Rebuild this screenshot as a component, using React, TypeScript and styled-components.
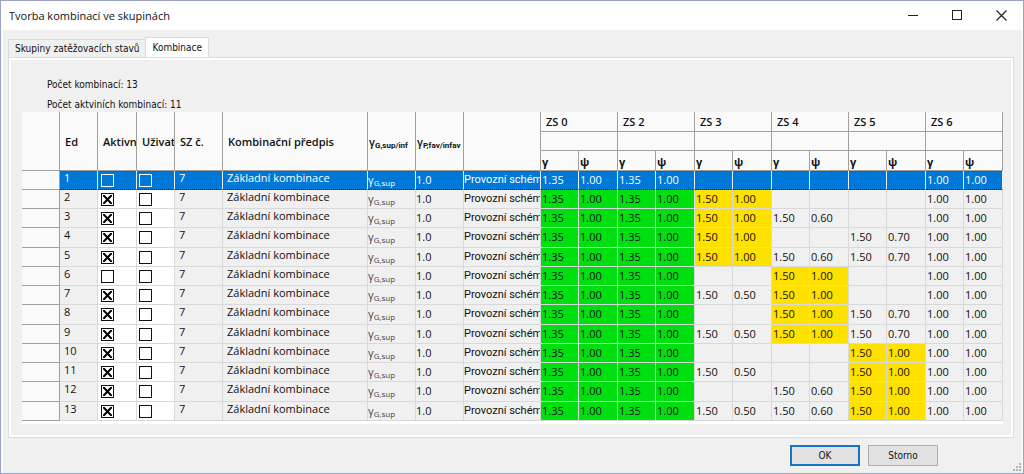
import React from "react";
import styled, { createGlobalStyle, css } from "styled-components";

const uiFont = `"Open Sans", "Noto Sans", sans-serif`;
const narrowFont = `Roboto, "Open Sans", sans-serif`;
const dialogFont = `"DejaVu Sans Condensed", "Noto Sans", sans-serif`;

const GlobalStyle = createGlobalStyle`
  * { box-sizing: border-box; }
  body { margin: 0; background: #f0f0f0; color: #111; }
`;

const Window = styled.div`
  display: flex;
  flex-direction: column;
  min-height: 100vh;
  border: 1px solid #9aa3c4;
  background: #f0f0f0;
  font: 10px/14px ${dialogFont};
`;

const TitleBar = styled.header`
  display: flex;
  align-items: center;
  justify-content: space-between;
  height: 29px;
  padding-left: 8px;
  background: #fff;
`;

const Title = styled.h1`
  margin: 0;
  font: 400 11px/16px ${uiFont};
`;

const WindowControls = styled.div`
  display: flex;
`;

const WindowButton = styled.button`
  display: flex;
  align-items: center;
  justify-content: center;
  width: 44px;
  height: 28px;
  padding: 0;
  border: 0;
  background: transparent;
`;

const Body = styled.main`
  flex: 1;
  display: flex;
  flex-direction: column;
  padding: 7px 8px 7px 5px;
  border: solid #fafafa;
  border-width: 0 1px 0 2px;
`;

const Tabs = styled.div`
  display: flex;
  align-items: flex-end;
  height: 20px;
`;

const Tab = styled.button<{ $active?: boolean }>`
  height: ${(p) => (p.$active ? 20 : 18)}px;
  padding: 0 6px;
  border: 1px solid #dadada;
  border-bottom: 0;
  background: ${(p) => (p.$active ? "#fff" : "#f0f0f0")};
  color: #111;
  font: 10px/16px ${dialogFont};
  white-space: nowrap;
  & + & { margin-left: -1px; }
`;

const Panel = styled.section`
  flex: 1;
  padding: 17px 10px 10px 13px;
  border: 1px solid #dcdcdc;
  outline: 2px solid #fff;
  outline-offset: -3px;
`;

const Summary = styled.p`
  margin: 0 0 0 25px;
  height: 20px;
  line-height: 20px;
`;

const Sheet = styled.div`
  margin-top: -3px;
  padding-bottom: 3px;
  background: #fff;
`;

const Grid = styled.table`
  width: 100%;
  table-layout: fixed;
  border-collapse: separate;
  border-spacing: 0;
  font: 11px/16px ${uiFont};
`;

const HeadRow = styled.tr<{ $tall?: boolean }>`
  height: ${(p) => (p.$tall ? 20 : 19)}px;
`;

const HeadCell = styled.th<{ $tight?: boolean }>`
  padding: 0 0 0 ${(p) => (p.$tight ? 1 : 5)}px;
  border-right: 1px solid #a0a0a0;
  border-bottom: 1px solid #a0a0a0;
  background: #fafafa;
  overflow: hidden;
  white-space: nowrap;
  text-align: left;
  font-weight: 600;
  &[rowspan] { padding-top: 2px; }
`;

const FactorHead = styled(HeadCell)`
  padding: 2px 0 0 1px;
  font-weight: 700;
`;

const Sub = styled.sub`
  font-size: 8px;
  line-height: 8px;
  vertical-align: -2px;
`;

const HeadSub = styled(Sub)`
  font-family: ${narrowFont};
  font-weight: 700;
`;

const RowHead = styled.th`
  padding: 0;
  border-right: 1px solid #a0a0a0;
  border-bottom: 1px solid #a0a0a0;
  background: #fafafa;
`;

type Tone = "plain" | "white" | "green" | "yellow";
const tones: Record<Tone, string> = {
  plain: "#f0f0f0",
  white: "#ffffff",
  green: "#00e010",
  yellow: "#ffe100",
};

const Cell = styled.td<{ $tone?: Tone; $low?: boolean; $indent?: number }>`
  padding: 0 0 0 ${(p) => p.$indent ?? 0}px;
  border-right: 1px solid #d9d9d9;
  border-bottom: 1px solid #d9d9d9;
  background: ${(p) => tones[p.$tone ?? "plain"]};
  vertical-align: top;
  line-height: ${(p) => (p.$low ? 18 : 14)}px;
  overflow: hidden;
  white-space: nowrap;
`;

const SchemeCell = styled(Cell)`
  font-family: ${narrowFont};
`;

const Row = styled.tr<{ $selected?: boolean }>`
  height: 19px;
  &:nth-child(4n) { height: 20px; }
  ${(p) =>
    p.$selected &&
    css`
      ${Cell} {
        background: #0078d7;
        border-right-color: #e6f1fb;
        border-bottom: 1px dotted #1c2b3a;
        box-shadow: inset 0 1px 0 #2a5f92;
        color: #fff;
      }
    `}
`;

const Check = styled.input<{ $inverse?: boolean }>`
  appearance: none;
  display: block;
  width: 13px;
  height: 13px;
  margin: 3px 0 0;
  border: 1px solid ${(p) => (p.$inverse ? "#fff" : "#111")};
  &:checked::before {
    content: "";
    display: block;
    width: 9px;
    height: 9px;
    margin: 1px;
    background: #000;
    clip-path: polygon(0 0, 18% 0, 50% 34%, 82% 0, 100% 0, 100% 14%, 66% 50%, 100% 86%, 100% 100%, 82% 100%, 50% 66%, 18% 100%, 0 100%, 0 86%, 34% 50%, 0 14%);
  }
`;

const Gamma = styled.span<{ $inverse?: boolean }>`
  color: ${(p) => (p.$inverse ? "#fff" : "#444")};
`;

const Footer = styled.footer`
  display: flex;
  gap: 8px;
  justify-content: flex-end;
  margin-top: 7px;
  padding-right: 76px;
`;

const DialogButton = styled.button<{ $primary?: boolean }>`
  width: 70px;
  height: 21px;
  padding: 0;
  border: ${(p) => (p.$primary ? "2px solid #1874c4" : "1px solid #adadad")};
  background: #e1e1e1;
  color: #111;
  font: 10px/14px ${dialogFont};
`;

const Grip = styled.svg`
  position: absolute;
  right: 3px;
  bottom: 3px;
`;

const Frame = styled.div`
  position: relative;
`;

const columnWidths = [38, 38, 39, 38, 48, 145, 48, 48, 77];
const groups = ["ZS 0", "ZS 2", "ZS 3", "ZS 4", "ZS 5", "ZS 6"];

type Combo = { active: boolean; main?: number; psi: Record<number, string> };
const combos: Combo[] = [
  { active: false, psi: {} },
  { active: true, main: 2, psi: {} },
  { active: true, main: 2, psi: { 3: "0.60" } },
  { active: true, main: 2, psi: { 4: "0.70" } },
  { active: true, main: 2, psi: { 3: "0.60", 4: "0.70" } },
  { active: false, main: 3, psi: {} },
  { active: true, main: 3, psi: { 2: "0.50" } },
  { active: true, main: 3, psi: { 4: "0.70" } },
  { active: true, main: 3, psi: { 2: "0.50", 4: "0.70" } },
  { active: true, main: 4, psi: {} },
  { active: true, main: 4, psi: { 2: "0.50" } },
  { active: true, main: 4, psi: { 3: "0.60" } },
  { active: true, main: 4, psi: { 2: "0.50", 3: "0.60" } },
];

function factors(combo: Combo, group: number): [string, string, Tone] {
  if (group < 2) return ["1.35", "1.00", "green"];
  if (group === 5) return ["1.00", "1.00", "plain"];
  if (combo.main === group) return ["1.50", "1.00", "yellow"];
  if (combo.psi[group]) return ["1.50", combo.psi[group], "plain"];
  return ["", "", "plain"];
}

function ComboRow({ combo, index }: { combo: Combo; index: number }) {
  const selected = index === 0;
  const n = index + 1;
  return (
    <Row $selected={selected}>
      <RowHead scope="row" aria-label={`Řádek ${n}`} />
      <Cell $indent={4}>{n}</Cell>
      <Cell $indent={3} $tone="white">
        <Check type="checkbox" defaultChecked={combo.active} $inverse={selected} aria-label={`Aktivní ${n}`} />
      </Cell>
      <Cell $indent={2} $tone="white">
        <Check type="checkbox" $inverse={selected} aria-label={`Uživatelská ${n}`} />
      </Cell>
      <Cell $indent={4}>7</Cell>
      <Cell $indent={4}>Základní kombinace</Cell>
      <Cell $low>
        <Gamma $inverse={selected}>γ<Sub>G,sup</Sub></Gamma>
      </Cell>
      <Cell $low>1.0</Cell>
      <SchemeCell $low>Provozní schém</SchemeCell>
      {groups.map((g, i) => {
        const [gamma, psi, tone] = factors(combo, i);
        return (
          <React.Fragment key={g}>
            <Cell $low $indent={1} $tone={tone}>{gamma}</Cell>
            <Cell $low $indent={1} $tone={tone}>{psi}</Cell>
          </React.Fragment>
        );
      })}
    </Row>
  );
}

export default function App() {
  return (
    <Frame>
      <GlobalStyle />
      <Window>
        <TitleBar>
          <Title>Tvorba kombinací ve skupinách</Title>
          <WindowControls>
            <WindowButton aria-label="Minimalizovat">
              <svg width="11" height="11" shapeRendering="crispEdges"><path d="M0 5.5h10" stroke="#222" /></svg>
            </WindowButton>
            <WindowButton aria-label="Maximalizovat">
              <svg width="11" height="11" shapeRendering="crispEdges"><path d="M.5 .5h9v9h-9z" fill="none" stroke="#222" /></svg>
            </WindowButton>
            <WindowButton aria-label="Zavřít">
              <svg width="11" height="11"><path d="M.5 .5l10 10M10.500 .5l-10 10" stroke="#222" strokeWidth="1.2" /></svg>
            </WindowButton>
          </WindowControls>
        </TitleBar>
        <Body>
          <Tabs role="tablist">
            <Tab role="tab" aria-selected={false}>Skupiny zatěžovacích stavů</Tab>
            <Tab role="tab" aria-selected $active>Kombinace</Tab>
          </Tabs>
          <Panel>
            <Summary>Počet kombinací: 13</Summary>
            <Summary>Počet aktviních kombinací: 11</Summary>
            <Sheet>
              <Grid>
                <colgroup>
                  {columnWidths.map((w, i) => <col key={i} width={w} />)}
                  {groups.map((g) => (
                    <React.Fragment key={g}>
                      <col width={38} />
                      <col width={39} />
                    </React.Fragment>
                  ))}
                </colgroup>
                <thead>
                  <HeadRow $tall>
                    <HeadCell rowSpan={3} />
                    <HeadCell rowSpan={3}>Ed</HeadCell>
                    <HeadCell rowSpan={3}>Aktivn</HeadCell>
                    <HeadCell rowSpan={3}>Uživate</HeadCell>
                    <HeadCell rowSpan={3}>SZ č.</HeadCell>
                    <HeadCell rowSpan={3}>Kombinační předpis</HeadCell>
                    <HeadCell rowSpan={3} $tight>γ<HeadSub>G,sup/inf</HeadSub></HeadCell>
                    <HeadCell rowSpan={3} $tight>γ<HeadSub>P,fav/infav</HeadSub></HeadCell>
                    <HeadCell rowSpan={3} />
                    {groups.map((g) => <HeadCell key={g} colSpan={2}>{g}</HeadCell>)}
                  </HeadRow>
                  <HeadRow>
                    {groups.map((g) => <HeadCell key={g} colSpan={2} />)}
                  </HeadRow>
                  <HeadRow $tall>
                    {groups.map((g) => (
                      <React.Fragment key={g}>
                        <FactorHead>γ</FactorHead>
                        <FactorHead>ψ</FactorHead>
                      </React.Fragment>
                    ))}
                  </HeadRow>
                </thead>
                <tbody>
                  {combos.map((c, i) => <ComboRow key={i} combo={c} index={i} />)}
                </tbody>
              </Grid>
            </Sheet>
          </Panel>
          <Footer>
            <DialogButton $primary>OK</DialogButton>
            <DialogButton>Storno</DialogButton>
          </Footer>
        </Body>
      </Window>
      <Grip width="8" height="8" fill="#b4b4b4" shapeRendering="crispEdges" aria-hidden="true">
        <path d="M6 0h2v2h-2zM3 3h2v2h-2zM6 3h2v2h-2zM0 6h2v2h-2zM3 6h2v2h-2zM6 6h2v2h-2z" />
      </Grip>
    </Frame>
  );
}
